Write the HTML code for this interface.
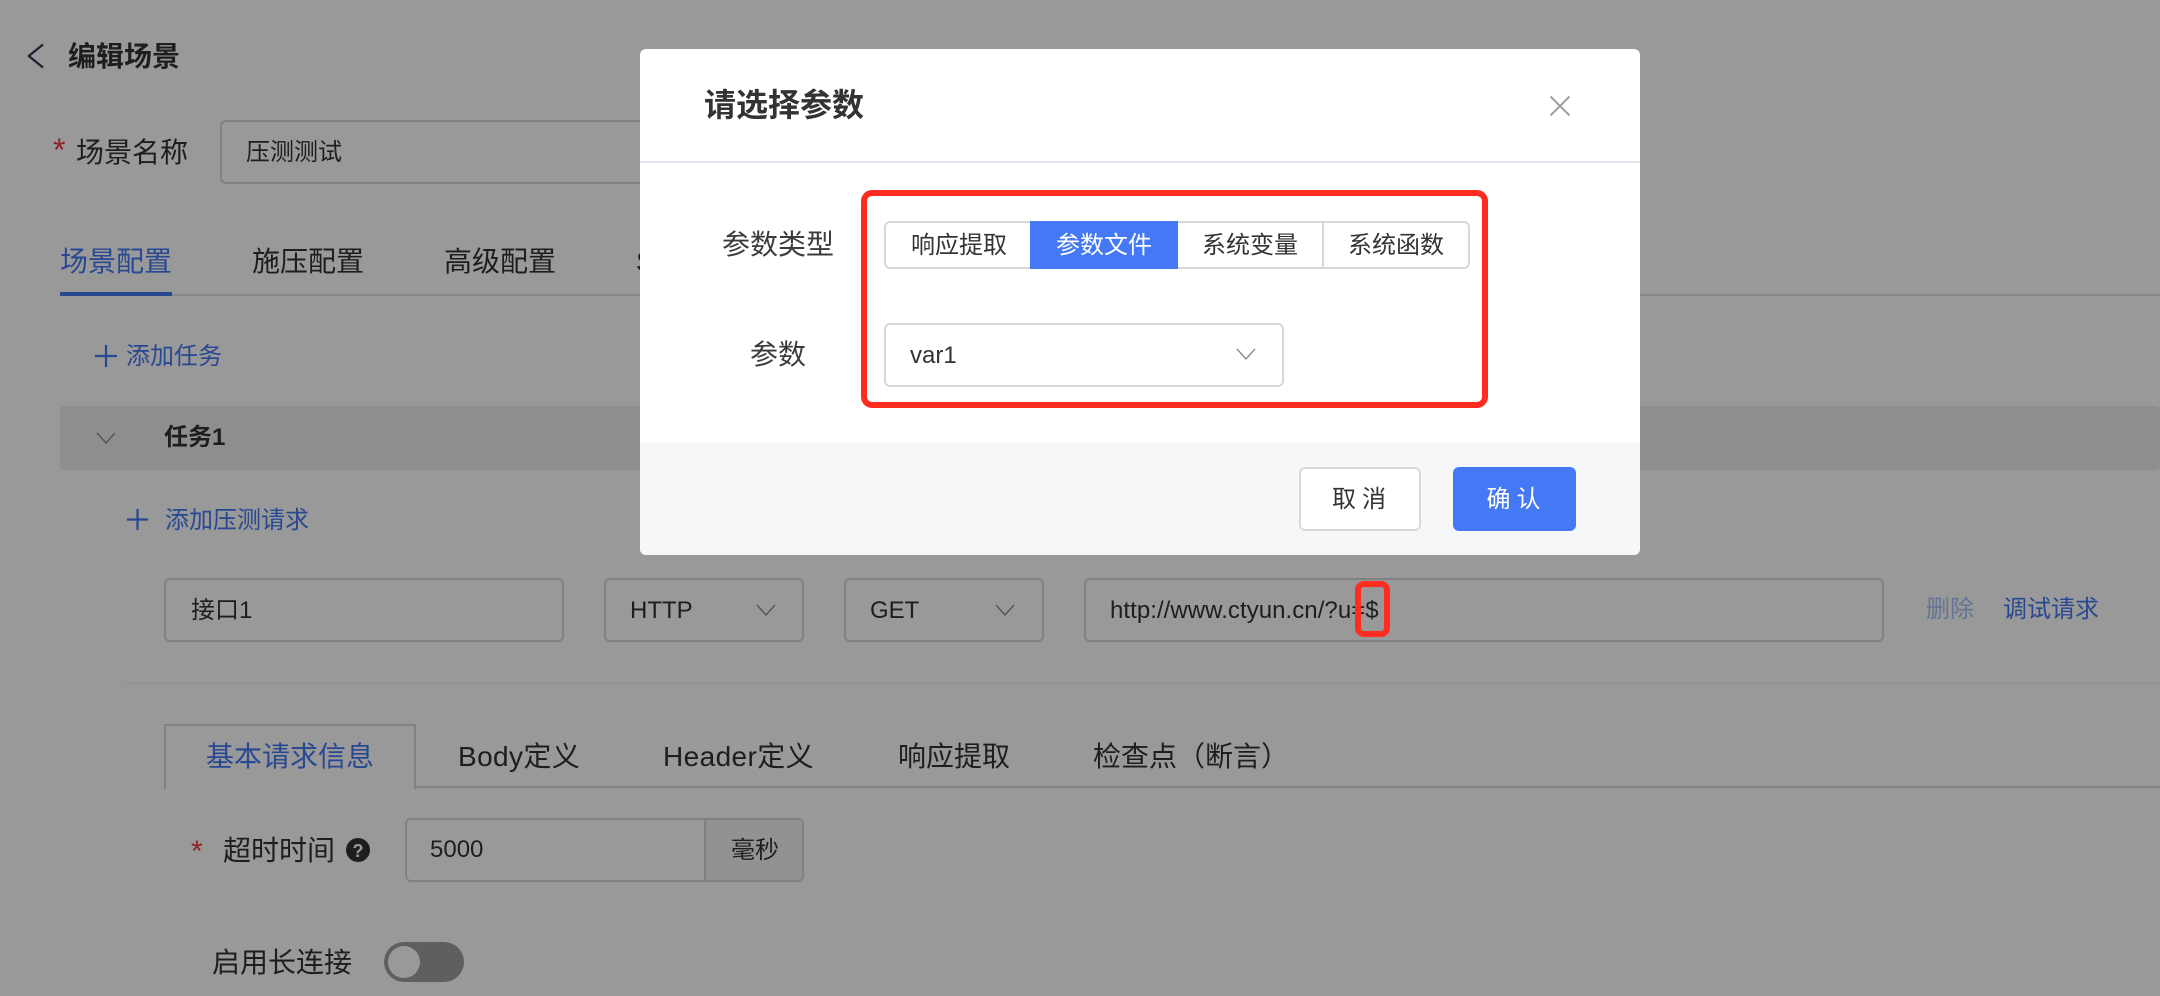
<!DOCTYPE html>
<html lang="zh-CN">
<head>
<meta charset="utf-8">
<title>编辑场景</title>
<style>
html,body{margin:0;padding:0;width:2160px;height:996px;overflow:hidden;background:#fff}
body{position:relative;font-family:"Liberation Sans","Noto Sans CJK SC",sans-serif;color:#333}
.t{position:absolute;white-space:nowrap;line-height:40px;height:40px}
.b{position:absolute;box-sizing:border-box}
.f{font-size:24px}
.l{font-size:28px}
.blue{color:#4478f4}
svg{position:absolute;overflow:visible}
.box{border:2px solid #d8d8d8;border-radius:6px;background:#fff}
#ov{position:absolute;left:0;top:0;width:2160px;height:996px;background:rgba(0,0,0,.4)}
#m{position:absolute;left:640px;top:49px;width:1000px;height:506px;background:#fff;border-radius:6px;overflow:hidden}
#a{position:absolute;left:0;top:0;width:2160px;height:996px}
</style>
</head>
<body>
<div id="a">
  <svg style="left:28px;top:44px" width="16" height="24" viewBox="0 0 16 24"><path d="M15 0.5 L0.8 12 L15 23.5" fill="none" stroke="#2b3a55" stroke-width="2.2"/></svg>
  <div class="t l" style="left:68px;top:37px;font-weight:700;color:#333">编辑场景</div>

  <div class="t" style="left:53px;top:130px;font-size:32px;color:#e8383b">*</div>
  <div class="t l" style="left:76px;top:133px">场景名称</div>
  <div class="b box" style="left:220px;top:120px;width:600px;height:64px"></div>
  <div class="t f" style="left:246px;top:133px">压测测试</div>

  <div class="b" style="left:60px;top:294px;width:2100px;height:2px;background:#dfe1e8"></div>
  <div class="b" style="left:60px;top:292px;width:112px;height:4px;background:#4478f4"></div>
  <div class="t l blue" style="left:60px;top:242px">场景配置</div>
  <div class="t l" style="left:252px;top:242px">施压配置</div>
  <div class="t l" style="left:444px;top:242px">高级配置</div>
  <div class="t l" style="left:636px;top:242px">SLA配置</div>

  <svg style="left:95px;top:345px" width="22" height="22" viewBox="0 0 22 22"><path d="M11 0V22M0 11H22" stroke="#4478f4" stroke-width="2.2" fill="none"/></svg>
  <div class="t f blue" style="left:126px;top:337px">添加任务</div>

  <div class="b" style="left:60px;top:406px;width:2100px;height:64px;background:#ecedf0;border-radius:4px"></div>
  <svg style="left:96px;top:432px" width="20" height="12" viewBox="0 0 20 12"><path d="M1 1L10 11L19 1" fill="none" stroke="#8a8a8a" stroke-width="1.4"/></svg>
  <div class="t f" style="left:164px;top:418px;font-weight:700">任务1</div>

  <svg style="left:127px;top:509px" width="21" height="21" viewBox="0 0 21 21"><path d="M10.5 0V21M0 10.5H21" stroke="#4478f4" stroke-width="2.2" fill="none"/></svg>
  <div class="t f blue" style="left:165px;top:501px">添加压测请求</div>

  <div class="b box" style="left:164px;top:578px;width:400px;height:64px"></div>
  <div class="t f" style="left:191px;top:591px">接口1</div>
  <div class="b box" style="left:604px;top:578px;width:200px;height:64px"></div>
  <div class="t f" style="left:630px;top:591px">HTTP</div>
  <svg style="left:756px;top:604px" width="20" height="12" viewBox="0 0 20 12"><path d="M1 1L10 11L19 1" fill="none" stroke="#8a8a8a" stroke-width="1.4"/></svg>
  <div class="b box" style="left:844px;top:578px;width:200px;height:64px"></div>
  <div class="t f" style="left:870px;top:591px">GET</div>
  <svg style="left:995px;top:604px" width="20" height="12" viewBox="0 0 20 12"><path d="M1 1L10 11L19 1" fill="none" stroke="#8a8a8a" stroke-width="1.4"/></svg>
  <div class="b box" style="left:1084px;top:578px;width:800px;height:64px"></div>
  <div class="t f" style="left:1110px;top:591px;letter-spacing:.05px">http://www.ctyun.cn/?u=$</div>
  <div class="t f" style="left:1926px;top:590px;color:#a9c1f9">删除</div>
  <div class="t f blue" style="left:2003px;top:590px">调试请求</div>

  <div class="b" style="left:124px;top:682px;width:2036px;height:2px;background:#f7f7f7"></div>

  <div class="b" style="left:415px;top:786px;width:1745px;height:2px;background:#d8d8d8"></div>
  <div class="b" style="left:164px;top:724px;width:252px;height:65px;border:2px solid #d8d8d8;border-bottom:0;background:#fff"></div>
  <div class="t l blue" style="left:206px;top:737px">基本请求信息</div>
  <div class="t l" style="left:458px;top:737px;letter-spacing:.4px">Body定义</div>
  <div class="t l" style="left:663px;top:737px;letter-spacing:.4px">Header定义</div>
  <div class="t l" style="left:898px;top:737px">响应提取</div>
  <div class="t l" style="left:1093px;top:737px">检查点（断言）</div>

  <div class="t" style="left:191px;top:832px;font-size:30px;color:#e8383b">*</div>
  <div class="t l" style="left:223px;top:831px">超时时间</div>
  <svg style="left:346px;top:838px" width="24" height="24" viewBox="0 0 24 24"><circle cx="12" cy="12" r="12" fill="#333"/><text x="12" y="19" font-size="18" font-weight="700" text-anchor="middle" fill="#fff" font-family="Liberation Sans, sans-serif">?</text></svg>
  <div class="b box" style="left:405px;top:818px;width:399px;height:64px"></div>
  <div class="b" style="left:704px;top:820px;width:98px;height:60px;background:#f3f4f7;border-left:2px solid #d8d8d8;border-radius:0 4px 4px 0"></div>
  <div class="t f" style="left:430px;top:830px">5000</div>
  <div class="t f" style="left:731px;top:831px">毫秒</div>

  <div class="t l" style="left:212px;top:943px">启用长连接</div>
  <div class="b" style="left:384px;top:942px;width:80px;height:40px;border-radius:20px;background:#9f9f9f"></div>
  <div class="b" style="left:388px;top:946px;width:32px;height:32px;border-radius:50%;background:#fff"></div>
</div>

<div id="ov"></div>

<div class="b" style="left:1355px;top:581px;width:35px;height:56px;border:6px solid #ff2d20;border-radius:9px"></div>

<div id="m">
  <div class="t" style="left:64px;top:36px;font-size:32px;font-weight:700;color:#333">请选择参数</div>
  <svg style="left:910px;top:47px" width="20" height="20" viewBox="0 0 20 20"><path d="M0.5 0.5L19.5 19.5M19.5 0.5L0.5 19.5" stroke="#a0a0a0" stroke-width="2" fill="none"/></svg>
  <div class="b" style="left:0;top:112px;width:1000px;height:2px;background:#e2e6ef"></div>

  <div class="t l" style="left:82px;top:176px;color:#3c3c3c">参数类型</div>
  <div class="t l" style="left:110px;top:286px;color:#3c3c3c">参数</div>

  <div class="b box" style="left:244px;top:172px;width:586px;height:48px"></div>
  <div class="b" style="left:390px;top:172px;width:148px;height:48px;background:#4478f4"></div>
  <div class="b" style="left:682px;top:174px;width:2px;height:44px;background:#d8d8d8"></div>
  <div class="t f" style="left:271px;top:177px">响应提取</div>
  <div class="t f" style="left:416px;top:177px;color:#fff">参数文件</div>
  <div class="t f" style="left:562px;top:177px">系统变量</div>
  <div class="t f" style="left:708px;top:177px">系统函数</div>

  <div class="b box" style="left:244px;top:274px;width:400px;height:64px"></div>
  <div class="t" style="left:270px;top:287px;font-size:24px;color:#333">var1</div>
  <svg style="left:596px;top:299px" width="20" height="12" viewBox="0 0 20 12"><path d="M1 1L10 11L19 1" fill="none" stroke="#8a8a8a" stroke-width="1.4"/></svg>

  <div class="b" style="left:221px;top:141px;width:627px;height:218px;border:6px solid #ff2d20;border-radius:11px"></div>

  <div class="b" style="left:0;top:394px;width:1000px;height:112px;background:#f6f7f9"></div>
  <div class="b box" style="left:659px;top:418px;width:122px;height:64px"></div>
  <div class="t f" style="left:661px;top:431px;width:122px;text-align:center;letter-spacing:6px">取消</div>
  <div class="b" style="left:813px;top:418px;width:123px;height:64px;background:#4478f4;border-radius:6px"></div>
  <div class="t f" style="left:815px;top:431px;width:123px;text-align:center;letter-spacing:6px;color:#fff">确认</div>
</div>
</body>
</html>
